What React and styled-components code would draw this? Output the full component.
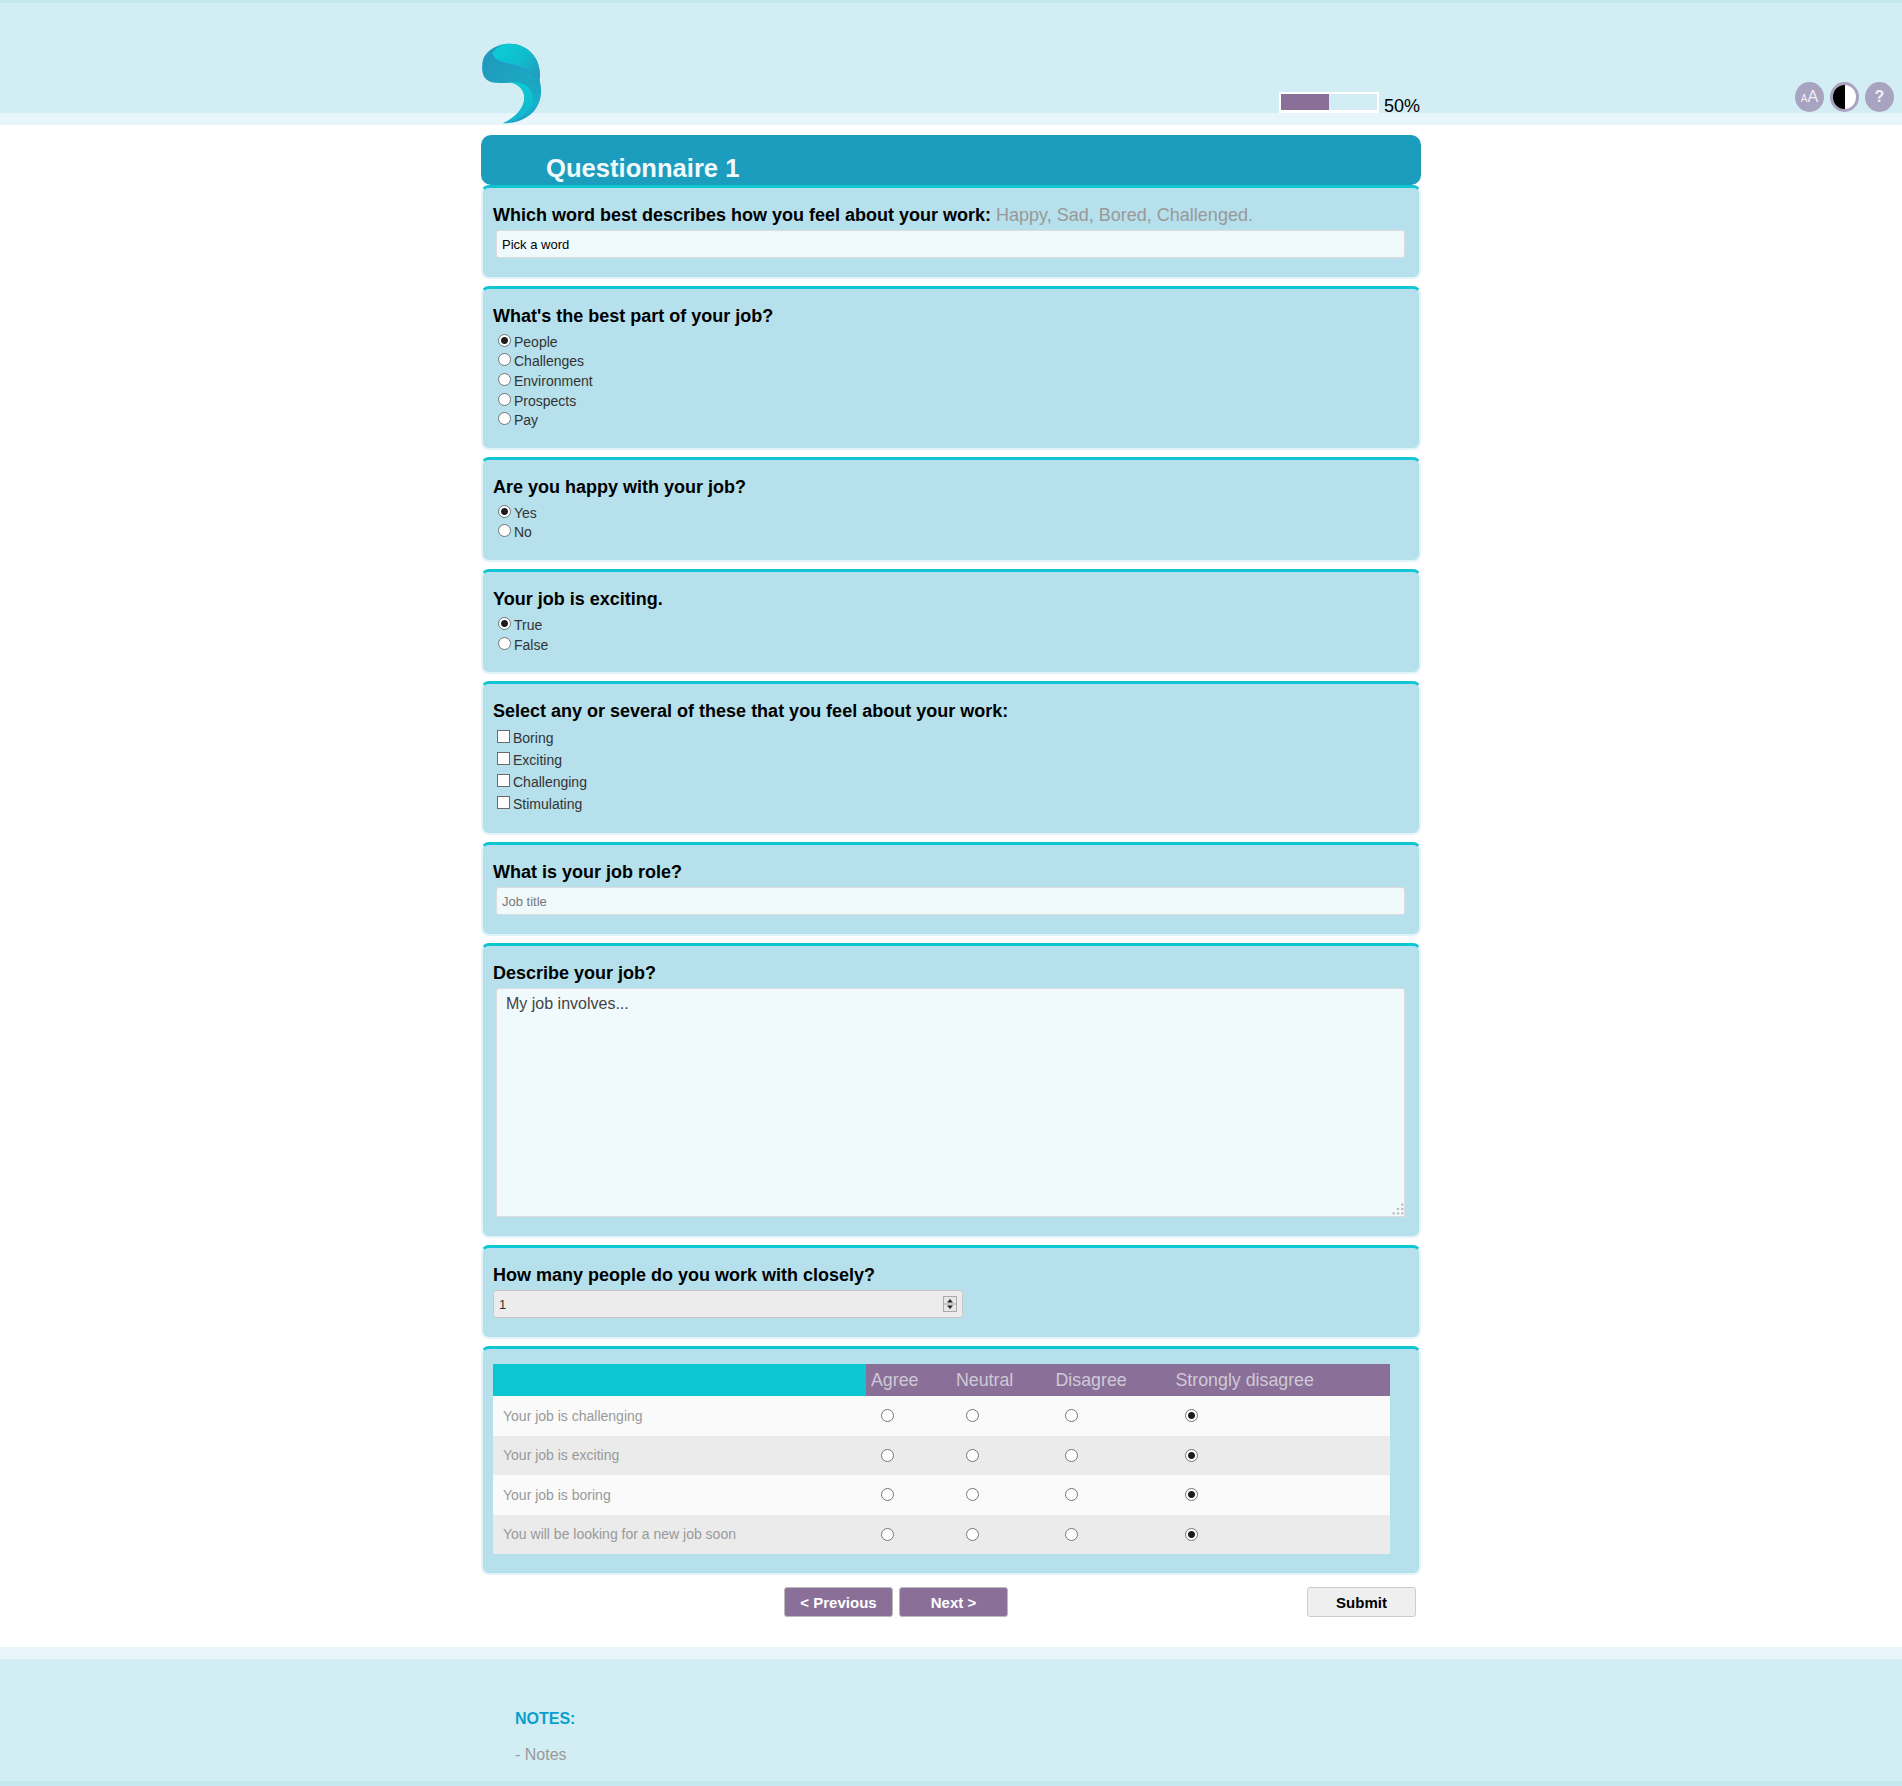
import React from 'react'
import styled, { createGlobalStyle } from 'styled-components'

const GlobalStyle = createGlobalStyle`
html, body {
    margin: 0;
    padding: 0;
    background: #fff;
    font-family: "Liberation Sans", Arial, sans-serif;
}
* {
    box-sizing: border-box;
}
`

const Header = styled.header`
display: grid;
grid-template-columns: 1fr 940px 1fr;
height: 125px;
background: #d3edf4;
border-top: 3px solid #c5e8f0;
border-bottom: 12px solid #e8f6fb;
`
const HeaderInner = styled.div`
grid-column: 2;
display: flex;
align-items: flex-end;
justify-content: space-between;
`
const Logo = styled.svg`
display: block;
width: 62px;
height: 81px;
margin-bottom: -11px;
`
const ProgressWrap = styled.div`
display: flex;
align-items: flex-end;
gap: 5px;
margin-right: 1px;
`
const ProgressBar = styled.div`
width: 100px;
height: 21px;
background: #d3edf4;
border: 2px solid #fff;
border-bottom-width: 3px;
`
const ProgressFill = styled.div`
height: 100%;
background: #8a7099;
`
const ProgressText = styled.span`
font-size: 18px;
line-height: 19px;
height: 19px;
margin-bottom: -3px;
color: #000;
`
const Tools = styled.div`
grid-column: 3;
display: flex;
align-items: flex-end;
justify-content: flex-end;
gap: 6px;
padding: 0 8px 1px 0;
`
const ToolButton = styled.div`
display: flex;
align-items: baseline;
justify-content: center;
width: 29px;
height: 30px;
border-radius: 50%;
background: #a7a3c1;
color: #f1f0f6;
font-size: 16px;
line-height: 30px;
font-weight: ${p => (p.$bold ? 'bold' : 'normal')};
`
const SmallA = styled.span`
font-size: 10px;
`
const ContrastButton = styled.div`
width: 29px;
height: 30px;
border-radius: 50%;
border: 3px solid #a7a3c1;
background: linear-gradient(90deg, #000 50%, #fff 50%);
`

const Main = styled.main`
width: 940px;
margin: 10px auto 0;
`
const Title = styled.h1`
margin: 0;
height: 50px;
padding: 18px 0 0 65px;
background: #1c9dbd;
border-radius: 10px;
color: #f0fafc;
font-size: 25.6px;
line-height: 30px;
font-weight: bold;
`
const Cards = styled.div`
display: flex;
flex-direction: column;
gap: 7px;
`
const Card = styled.section`
padding: 16px 10px 18px;
background: #b5e0ec;
border: 2px solid #e2f4f9;
border-top: 3px solid #0cc6d2;
border-radius: 8px;
`
const TableCard = styled(Card)`
padding: 15px 28px 19px 10px;
`
const Question = styled.h2`
margin: 0;
font-size: 18px;
line-height: 22px;
font-weight: bold;
color: #000;
`
const Hint = styled.span`
font-weight: normal;
font-size: 18px;
color: #999;
`
const TextField = styled.input`
display: block;
width: 909px;
height: 28px;
margin: 4px 0 1px 3px;
padding: 0 5px;
background: #f0f9fc;
border: 1px solid #dcdcdc;
border-radius: 3px;
font-family: inherit;
font-size: 13px;
color: #000;
&::placeholder {
    color: #777;
    opacity: 1;
}
`
const AreaWrap = styled.div`
position: relative;
width: 909px;
height: 229px;
margin: 4px 0 1px 3px;
`
const TextArea = styled.textarea`
display: block;
width: 100%;
height: 100%;
padding: 6px 9px;
background: #f0f9fc;
border: 1px solid #dcdcdc;
border-radius: 3px 3px 0 0;
font-family: inherit;
font-size: 16px;
line-height: 18px;
color: #444;
resize: none;
`
const Grip = styled.svg`
position: absolute;
right: 1px;
bottom: 2px;
width: 12px;
height: 12px;
`
const NumberWrap = styled.div`
position: relative;
width: 470px;
height: 28px;
margin: 4px 0 1px;
`
const NumberField = styled.input`
display: block;
width: 100%;
height: 100%;
padding: 0 5px;
background: #ececec;
border: 1px solid #c8c8c8;
border-radius: 3px;
font-family: inherit;
font-size: 13px;
color: #333;
`
const Spinner = styled.svg`
position: absolute;
top: 6px;
right: 6px;
width: 14px;
height: 16px;
`
const Options = styled.div`
margin-top: 5px;
`
const Option = styled.label`
display: flex;
align-items: center;
height: ${p => (p.$tall ? '22px' : '19.6px')};
padding-left: ${p => (p.$tall ? '4px' : '5px')};
font-size: 14px;
color: #333;
`
const Radio = styled.input.attrs({ type: 'radio' })`
appearance: none;
flex: none;
width: 13px;
height: 13px;
margin: ${p => (p.$inCell ? '0' : '-3px 3px 0 0')};
background: #fff;
border: 1px solid #767676;
border-radius: 50%;
&:checked {
    background: radial-gradient(circle, #1c1c1c 0, #1c1c1c 3px, #fff 4px);
}
`
const CheckBox = styled.input.attrs({ type: 'checkbox' })`
appearance: none;
flex: none;
width: 13px;
height: 13px;
margin: -3px 3px 0 0;
background: #fff;
border: 1px solid #6b6b6b;
`
const Table = styled.table`
width: 897px;
table-layout: fixed;
border-collapse: collapse;
border-spacing: 0;
`
const HeadCell = styled.th`
height: 32px;
padding: 0 0 0 5px;
background: ${p => (p.$blank ? '#0cc6d2' : '#8a7099')};
color: #cfc9d6;
font-size: 17.8px;
font-weight: normal;
text-align: left;
`
const Row = styled.tr`
height: 39.5px;
background: ${p => (p.$odd ? '#ebebeb' : '#fafafa')};
`
const RowLabel = styled.td`
padding: 0 0 1px 10px;
font-size: 14px;
color: #999;
`
const RadioCell = styled.td`
padding: 0 0 1px 14.5px;
vertical-align: middle;
line-height: 0;
`
const Actions = styled.div`
display: flex;
gap: 6px;
margin: 12px 0 30px;
padding: 0 5px 0 303px;
`
const Button = styled.button`
width: 109px;
height: 30px;
padding: 0;
background: ${p => (p.$plain ? '#efefef' : '#8a7099')};
border: 1px solid ${p => (p.$plain ? '#ccc' : '#bbb')};
border-radius: 3px;
color: ${p => (p.$plain ? '#000' : '#fff')};
font-family: inherit;
font-size: 15px;
font-weight: bold;
margin-left: ${p => (p.$push ? 'auto' : '0')};
`
const Footer = styled.footer`
background: #d3edf4;
border-top: 12px solid #e8f6fb;
border-bottom: 5px solid #c5e8f0;
`
const FooterInner = styled.div`
width: 940px;
margin: 0 auto;
padding: 51px 0 17px 34px;
`
const NotesTitle = styled.h3`
margin: 0 0 18px;
font-size: 16px;
line-height: 18px;
font-weight: bold;
color: #0aa0cd;
`
const NotesText = styled.p`
margin: 0;
font-size: 16px;
line-height: 18px;
color: #999;
`

const choiceGroups = [
    { name: 'best', question: "What's the best part of your job?", options: ['People', 'Challenges', 'Environment', 'Prospects', 'Pay'] },
    { name: 'happy', question: 'Are you happy with your job?', options: ['Yes', 'No'] },
    { name: 'exciting', question: 'Your job is exciting.', options: ['True', 'False'] },
]
const feelings = ['Boring', 'Exciting', 'Challenging', 'Stimulating']
const matrixColumns = [
    { label: 'Agree', width: 85 },
    { label: 'Neutral', width: 99.5 },
    { label: 'Disagree', width: 120 },
    { label: 'Strongly disagree', width: 219.5 },
]
const matrixRows = ['Your job is challenging', 'Your job is exciting', 'Your job is boring', 'You will be looking for a new job soon']
const gripDots = [[9.5, 1.5], [5.5, 5.5], [9.5, 5.5], [1.5, 9.5], [5.5, 9.5], [9.5, 9.5]]

function LogoMark() {
    return (
        <Logo viewBox="35 40 185 245" aria-label="logo">
            <defs>
                <linearGradient id="bodyGrad" x1="0" y1="0" x2="1" y2="0.4">
                    <stop offset="0" stopColor="#2096bd" />
                    <stop offset="1" stopColor="#1ba9c1" />
                </linearGradient>
                <linearGradient id="topGrad" x1="0.2" y1="0.2" x2="1" y2="0.7">
                    <stop offset="0" stopColor="#0bcad3" />
                    <stop offset="0.5" stopColor="#10bccd" />
                    <stop offset="1" stopColor="#20a0bf" />
                </linearGradient>
                <linearGradient id="tailOuter" x1="0.6" y1="0" x2="0.4" y2="1">
                    <stop offset="0" stopColor="#1ba4c0" />
                    <stop offset="0.5" stopColor="#17b0ca" />
                    <stop offset="1" stopColor="#1d9fc6" />
                </linearGradient>
                <linearGradient id="tailInner" x1="0.5" y1="0" x2="0.6" y2="1">
                    <stop offset="0" stopColor="#0ccad4" />
                    <stop offset="1" stopColor="#14b4cd" />
                </linearGradient>
            </defs>
            <path d="M120 42C175 42 214 85 212 140C211 150 210 155 211 160L125 160C100 160 70 165 52 152C35 140 35 110 40 90C50 60 85 42 120 42Z" fill="url(#bodyGrad)" />
            <path d="M68 70C85 48 100 42 120 42C175 42 214 85 212 140L210 152C180 120 145 108 115 103C90 98 72 90 68 70Z" fill="url(#topGrad)" />
            <path d="M66 76C78 98 108 100 130 107C160 117 190 130 209 153" fill="none" stroke="#2a8fd0" strokeWidth="2.5" />
            <path d="M125 160C150 156 185 150 210 152C217 170 219 200 207 225C190 262 150 283 100 283C140 265 165 235 165 205C165 185 150 165 125 160Z" fill="url(#tailOuter)" />
            <path d="M125 160C150 155 190 165 191 212C191 245 150 276 100 283C140 265 165 235 165 205C165 185 150 165 125 160Z" fill="url(#tailInner)" />
        </Logo>
    )
}

function App() {
    return (
        <>
            <GlobalStyle />
            <Header>
                <HeaderInner>
                    <LogoMark />
                    <ProgressWrap>
                        <ProgressBar>
                            <ProgressFill style={{ width: '50%' }} />
                        </ProgressBar>
                        <ProgressText>50%</ProgressText>
                    </ProgressWrap>
                </HeaderInner>
                <Tools>
                    <ToolButton><SmallA>A</SmallA>A</ToolButton>
                    <ContrastButton />
                    <ToolButton $bold>?</ToolButton>
                </Tools>
            </Header>
            <Main>
                <Title>Questionnaire 1</Title>
                <Cards>
                    <Card>
                        <Question>Which word best describes how you feel about your work: <Hint>Happy, Sad, Bored, Challenged.</Hint></Question>
                        <TextField type="text" defaultValue="Pick a word" />
                    </Card>
                    {choiceGroups.map(group => (
                        <Card key={group.name}>
                            <Question>{group.question}</Question>
                            <Options>
                                {group.options.map((option, i) => (
                                    <Option key={option}>
                                        <Radio name={group.name} defaultChecked={i === 0} />
                                        {option}
                                    </Option>
                                ))}
                            </Options>
                        </Card>
                    ))}
                    <Card>
                        <Question>Select any or several of these that you feel about your work:</Question>
                        <Options>
                            {feelings.map(item => (
                                <Option key={item} $tall>
                                    <CheckBox />
                                    {item}
                                </Option>
                            ))}
                        </Options>
                    </Card>
                    <Card>
                        <Question>What is your job role?</Question>
                        <TextField type="text" placeholder="Job title" />
                    </Card>
                    <Card>
                        <Question>Describe your job?</Question>
                        <AreaWrap>
                            <TextArea defaultValue="My job involves..." />
                            <Grip viewBox="0 0 11 11">
                                {gripDots.map(([cx, cy]) => (
                                    <circle key={`${cx}-${cy}`} cx={cx} cy={cy} r="1.1" fill="#bbb" />
                                ))}
                            </Grip>
                        </AreaWrap>
                    </Card>
                    <Card>
                        <Question>How many people do you work with closely?</Question>
                        <NumberWrap>
                            <NumberField type="text" defaultValue="1" />
                            <Spinner viewBox="0 0 14 16">
                                <rect x="0.5" y="0.5" width="13" height="15" fill="#e6e6e6" stroke="#aaa" />
                                <line x1="1" y1="8" x2="13" y2="8" stroke="#aaa" />
                                <path d="M7 3L10 6.5H4Z M7 13L4 9.5H10Z" fill="#222" />
                            </Spinner>
                        </NumberWrap>
                    </Card>
                    <TableCard>
                        <Table>
                            <colgroup>
                                <col style={{ width: 373 }} />
                                {matrixColumns.map(col => (
                                    <col key={col.label} style={{ width: col.width }} />
                                ))}
                            </colgroup>
                            <thead>
                                <tr>
                                    <HeadCell $blank />
                                    {matrixColumns.map(col => (
                                        <HeadCell key={col.label}>{col.label}</HeadCell>
                                    ))}
                                </tr>
                            </thead>
                            <tbody>
                                {matrixRows.map((row, r) => (
                                    <Row key={row} $odd={r % 2 === 1}>
                                        <RowLabel>{row}</RowLabel>
                                        {matrixColumns.map((col, c) => (
                                            <RadioCell key={col.label}>
                                                <Radio $inCell name={`row-${r}`} defaultChecked={c === 3} />
                                            </RadioCell>
                                        ))}
                                    </Row>
                                ))}
                            </tbody>
                        </Table>
                    </TableCard>
                </Cards>
                <Actions>
                    <Button>&lt; Previous</Button>
                    <Button>Next &gt;</Button>
                    <Button $plain $push>Submit</Button>
                </Actions>
            </Main>
            <Footer>
                <FooterInner>
                    <NotesTitle>NOTES:</NotesTitle>
                    <NotesText>- Notes</NotesText>
                </FooterInner>
            </Footer>
        </>
    )
}

export default App
